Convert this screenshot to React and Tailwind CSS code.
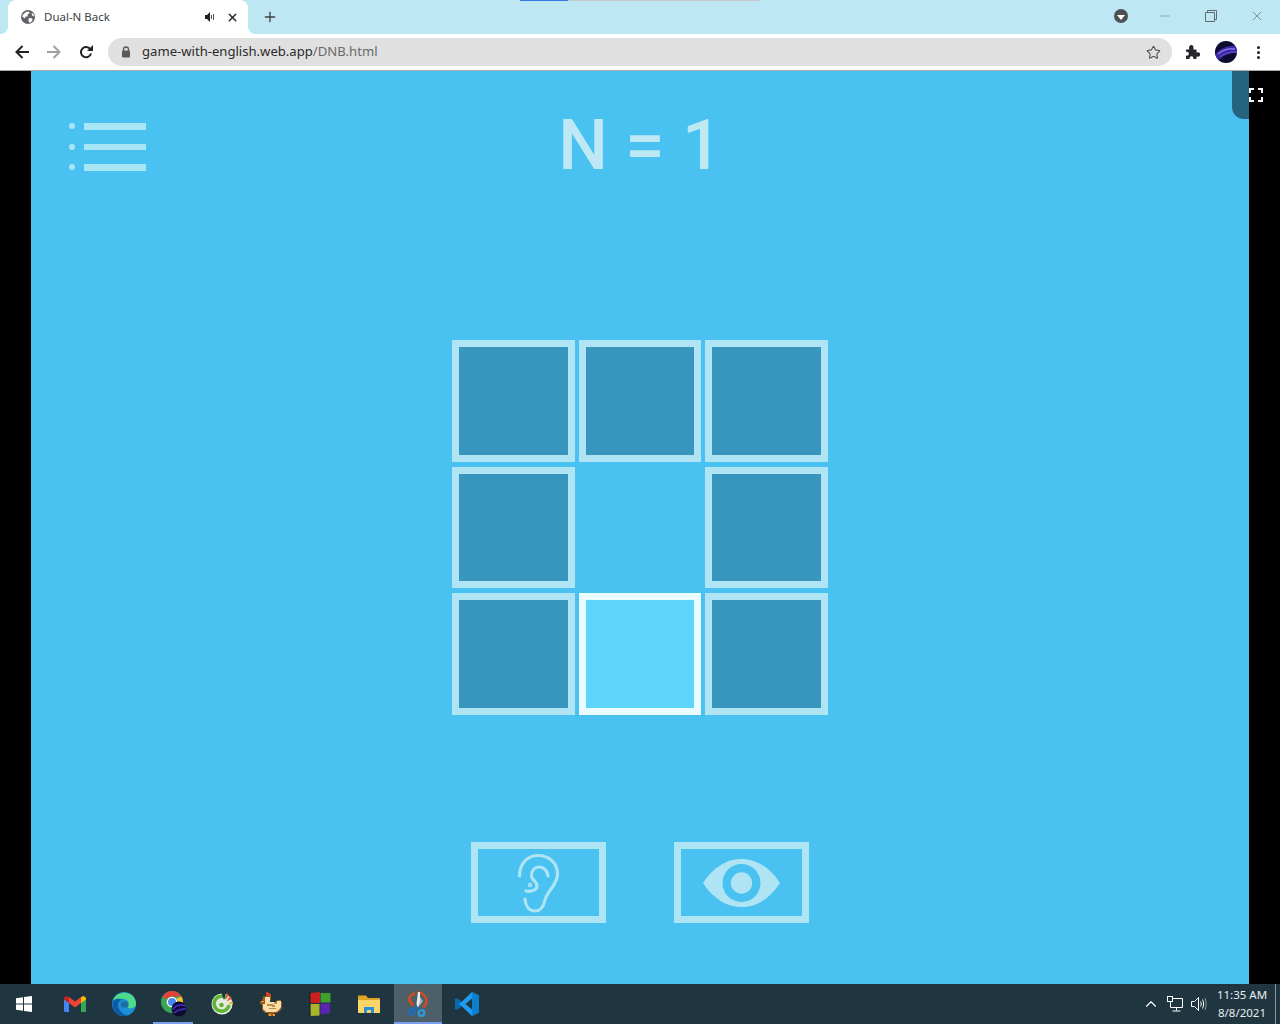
import { Star, Plus, X, Minus, ChevronUp } from "lucide-react";

const CELLS = [
  { col: 0, row: 0 },
  { col: 1, row: 0 },
  { col: 2, row: 0 },
  { col: 0, row: 1 },
  { col: 2, row: 1 },
  { col: 0, row: 2 },
  { col: 1, row: 2, lit: true },
  { col: 2, row: 2 },
];

function GlobeIcon() {
  return (
    <svg width="14" height="14" viewBox="0 0 14 14">
      <circle cx="7" cy="7" r="7" fill="#5f6368" />
      <path d="M2 4.500 5 2 8 1.600 8.500 3.400 6.500 4.600 6.800 6.600 4.600 6.600 4 8.400 1.200 6.600Z" fill="#fff" />
      <path d="M8 8 11 8.200 11.600 10 9.600 12.400 8 12.600 7.400 10Z" fill="#fff" />
      <path d="M10.600 2.600 12.600 4.600 13 6.400 11 5.400Z" fill="#fff" />
    </svg>
  );
}

function TabSpeaker() {
  return (
    <svg width="10" height="10" viewBox="0 0 10 10">
      <path d="M0 3h2l3-3v10L2 7H0Z" fill="#222" />
      <path d="M6.500 3v4M8.500 2v6" stroke="#555" strokeWidth="1" />
    </svg>
  );
}

function BackArrow({ color }) {
  return (
    <svg width="14" height="14" viewBox="0 0 14 14" fill="none" stroke={color} strokeWidth="2">
      <path d="M14 7H1.500M7.500 1 1.500 7 7.500 13" />
    </svg>
  );
}

function ForwardArrow({ color }) {
  return (
    <svg width="14" height="14" viewBox="0 0 14 14" fill="none" stroke={color} strokeWidth="2">
      <path d="M0 7H12.500M6.500 1 12.500 7 6.500 13" />
    </svg>
  );
}

function Reload() {
  return (
    <svg width="14" height="14" viewBox="0 0 14 14">
      <path d="M11.200 4.200A5.100 5.100 0 1 0 12 8.500" fill="none" stroke="#222" strokeWidth="2" />
      <path d="M14 0V6H8Z" fill="#222" />
    </svg>
  );
}

function LockIcon() {
  return (
    <svg width="10" height="12" viewBox="0 0 10 12">
      <path d="M2.500 5V3.500a2.500 2.500 0 0 1 5 0V5" fill="none" stroke="#5a5a5a" strokeWidth="1.300" />
      <rect x="1" y="4.500" width="8" height="7" rx="1" fill="#5a5a5a" />
    </svg>
  );
}

function Puzzle() {
  return (
    <svg width="16" height="16" viewBox="0 0 16 16">
      <path
        d="M1 5.500h3.200C3.600 3 4.600 1 6.300 1s2.700 2 2.100 4.500h3.100v3c2.600-.6 3.600.4 3.600 2s-1 2.700-3.600 2V15H8.300c.5-2-.5-2.800-1.800-2.800s-2.200.8-1.800 2.800H1v-3.400c2 .5 2.800-.6 2.800-1.900S3 7.300 1 7.800Z"
        fill="#26282b"
      />
    </svg>
  );
}

function Avatar() {
  return (
    <svg width="22" height="22" viewBox="0 0 22 22">
      <defs>
        <clipPath id="avatar-clip">
          <circle cx="11" cy="11" r="11" />
        </clipPath>
      </defs>
      <g clipPath="url(#avatar-clip)">
        <rect width="22" height="22" fill="#0c0a2e" />
        <path d="M0 14C5 7 14 4 22 5v7C15 11 8 14 3 20Z" fill="#3a2aa8" />
        <path d="M3 13C8 9 14 7 20 8" stroke="#8a6ee8" strokeWidth="1.500" fill="none" />
        <path d="M5 16C10 12 15 11 22 11" stroke="#5a46cc" strokeWidth="1.500" fill="none" />
      </g>
    </svg>
  );
}

function MenuIcon() {
  return (
    <div className="flex w-[77px] flex-col gap-[14px]">
      {[0, 1, 2].map((i) => (
        <div key={i} className="flex items-center justify-between">
          <span className="h-[6px] w-[6px] rounded-full bg-[#a8e6f6]" />
          <span className="h-[6.500px] w-[62px] bg-[#a8e6f6]" />
        </div>
      ))}
    </div>
  );
}

function EarIcon() {
  return (
    <svg width="50" height="64" viewBox="0 0 50 64" fill="none" stroke="#aee4f3" strokeWidth="3.200" strokeLinecap="round">
      <path d="M5.500 25C5.500 12 14 4.500 24 4.500C35 4.500 43.500 12 43.500 23C43.500 34 33 40 31 49C29.500 56 27 60 21 60C15 60 11.500 55 11 48" />
      <path d="M17.500 25C17.500 19 21 16 25 16C30 16 33.500 20 34 25" />
      <path d="M17.500 25C17.500 29 23 30 23 35C23 39 17 41 12 40" />
      <circle cx="16" cy="34" r="1.500" strokeWidth="1.500" />
    </svg>
  );
}

function EyeIcon() {
  return (
    <svg width="80" height="50" viewBox="0 0 80 50">
      <path d="M1 25C12 8 26 1 39.500 1C53 1 67 8 78 25C67 42 53 49 39.500 49C26 49 12 42 1 25Z" fill="#aee4f3" />
      <circle cx="39.500" cy="25" r="19" fill="#49c1f1" />
      <circle cx="39.500" cy="25" r="10.700" fill="#aee4f3" />
    </svg>
  );
}

function FullscreenIcon() {
  return (
    <svg width="14" height="14" viewBox="0 0 14 14" fill="none" stroke="#fff" strokeWidth="2">
      <path d="M1 5V1h4M9 1h4v4M13 9v4H9M5 13H1V9" />
    </svg>
  );
}

function WindowsLogo() {
  return (
    <svg width="16" height="16" viewBox="0 0 16 16" fill="#fff">
      <path d="M0 2.300 7 1.300V7.500H0ZM8 1.100 16 0V7.500H8ZM0 8.500H7V14.700L0 13.700ZM8 8.500H16V16L8 14.900Z" />
    </svg>
  );
}

function Gmail() {
  return (
    <svg width="22" height="16" viewBox="0 0 22 16">
      <path d="M0 3 5 6.500V16H1.500A1.500 1.500 0 0 1 0 14.500Z" fill="#4285f4" />
      <path d="M22 3 17 6.500V16h3.500A1.500 1.500 0 0 0 22 14.500Z" fill="#34a853" />
      <path d="M5 7 11 11.500 17 7V1L11 5.500 5 1Z" fill="#ea4335" />
      <path d="M0 3.500V2.500C0 .5 2.500-.5 4 .6L5 1.400V7Z" fill="#c5221f" />
      <path d="M22 3.500V2.500C22 .5 19.500-.5 18 .6L17 1.400V7Z" fill="#fbbc04" />
    </svg>
  );
}

function Edge() {
  return (
    <svg width="24" height="24" viewBox="0 0 24 24">
      <circle cx="12" cy="12" r="12" fill="#1d8fd6" />
      <path d="M1 8C4 1 12-1 18 2C22 4 24 8 24 12C24 16 19 17 15.500 16C18 13 17 8 12 7C7 6 3 8 1 8Z" fill="#4fd98a" />
      <path d="M.5 11C2 7 6 6 10 7.500C6 9 5 13 7 17C9 21 14 24 17 23C11 26 3 22 1 16Z" fill="#0c5aa6" />
      <path d="M8.500 13C9 9 14 8 16 11C17 13 16 15 15 15.500H10Z" fill="#1f3540" opacity="0.350" />
    </svg>
  );
}

function ChromeWithProfile() {
  return (
    <svg width="26" height="26" viewBox="0 0 26 26" className="ml-[3px]">
      <circle cx="11" cy="11" r="11" fill="#3aa757" />
      <path d="M1.500 5.500A11 11 0 0 1 20.500 5.500H11A5.500 5.500 0 0 0 6 8.500Z" fill="#e0433a" />
      <path d="M20.500 5.500A11 11 0 0 1 11 22L15.800 13.800A5.500 5.500 0 0 0 15.500 7.500Z" fill="#fbc02d" />
      <circle cx="11" cy="11" r="5.300" fill="#fff" />
      <circle cx="11" cy="11" r="4" fill="#4a8af0" />
      <circle cx="18" cy="18" r="7.500" fill="#0c0a2e" />
      <path d="M11.500 19C14 15 19 13 25 15M13 22C16 19 20 18 25 18" stroke="#3a2aa8" strokeWidth="2" fill="none" />
    </svg>
  );
}

function CocCoc() {
  return (
    <svg width="22" height="22" viewBox="0 0 22 22">
      <circle cx="11" cy="11" r="10.500" fill="#e4ebe0" />
      <path d="M15.500 5A7.500 7.500 0 1 0 18 12" fill="none" stroke="#5fb536" strokeWidth="3.500" />
      <circle cx="10.500" cy="12" r="2.300" fill="#5fb536" />
      <path d="M10.500 0 13 7 15 0Z" fill="#1f3540" />
      <path d="M15.500 0 14.500 7 18 2Z" fill="#e05a32" />
      <path d="M19 3 15.500 8.500 21 6Z" fill="#e05a32" />
      <path d="M21.500 8 17 10.500 22 11.500Z" fill="#e8b23a" />
    </svg>
  );
}

function Chicken() {
  return (
    <svg width="24" height="24" viewBox="0 0 24 24">
      <path d="M7 2h4v2h1v4h-1v2h6l1-2h4v2h1v6l-2 3-3 2h-3v3H9v-3H6l-3-3v-5l-2-1V9h2V7h1V4h3Z" fill="#9a5a1e" />
      <path d="M6 5h5v5h6l2-1h3v6l-2 3-3 2H7l-3-3v-5h2Z" fill="#f8dfae" />
      <path d="M7 0h2v1h2v1h1v2H8V3H7Z" fill="#d8411f" />
      <path d="M5 9h-3v1h3Z" fill="#e8a020" />
      <path d="M8 12h6v1h2v2h-3v-1H8ZM15 10h3v2h-3ZM10 16h7v1h-7Z" fill="#c98a3a" />
      <path d="M10 22h2v2h-2ZM14 22h2v2h-2Z" fill="#e8a020" />
    </svg>
  );
}

function ColorSquares() {
  return (
    <svg width="22" height="24" viewBox="0 0 22 24">
      <path d="M1 1 11 0V11H1Z" fill="#c9201f" />
      <path d="M11.500 1 21.500 1V10.500H11.500Z" fill="#3f9f2b" />
      <path d="M1 12H10.500V23.500L1.500 24Z" fill="#a8b52d" />
      <path d="M11.500 11.500H21V21L11.500 22.500Z" fill="#5a23b0" />
      <path d="M0 0.500 1.500 0.500 1.500 24 0.500 24Z" fill="#222" />
    </svg>
  );
}

function Folder() {
  return (
    <svg width="22" height="18" viewBox="0 0 22 18">
      <path d="M0 1.500C0 1 .5 .5 1 .5H8L10 3H21C21.500 3 22 3.500 22 4V6H0Z" fill="#e0a526" />
      <rect y="5" width="22" height="13" fill="#fcd568" />
      <path d="M6 18V12H16V18H13V15H9V18Z" fill="#2b8fd8" />
    </svg>
  );
}

function Snip() {
  return (
    <svg width="20" height="26" viewBox="0 0 20 26">
      <path d="M9 1.500C14 1 18.500 5 18.500 10C18.500 13 17 15 15 16.500" fill="none" stroke="#d24a1f" strokeWidth="2.500" />
      <path d="M7 2.500C3 3 1 6 1.500 9C2 11.500 3.500 13 5.500 14" fill="none" stroke="#d24a1f" strokeWidth="3" />
      <path d="M10 1 12 1 12 12 10 17 8.500 13Z" fill="#e8ecef" />
      <path d="M12 6 15 10 11.500 15Z" fill="#a9b0b5" />
      <circle cx="3.500" cy="21" r="2.800" fill="none" stroke="#1d6fc0" strokeWidth="2.200" />
      <circle cx="13.500" cy="22" r="2.800" fill="none" stroke="#2b9be0" strokeWidth="2.200" />
      <path d="M5.500 19 9 16M11.500 19.500 10 16" fill="none" stroke="#1d6fc0" strokeWidth="2" />
    </svg>
  );
}

function VsCode() {
  return (
    <svg width="24" height="24" viewBox="0 0 24 24">
      <path d="M17 0 24 3.400V20.600L17 24 6.500 14 2 17.500 0 16.500V7.500L2 6.500 6.500 10ZM17 6.500 10.500 12 17 17.500Z" fill="#1f9cf0" />
      <path d="M17 0 24 3.400V20.600L17 24V17.500L17 6.500Z" fill="#0d7fcf" />
      <path d="M2 6.500 6.500 10 3.500 12 6.500 14 2 17.500 0 16.500V7.500Z" fill="#0a68b0" />
    </svg>
  );
}

function NetworkTray() {
  return (
    <svg width="16" height="16" viewBox="0 0 16 16" fill="none" stroke="#fff" strokeWidth="1">
      <path d="M3.500 2.500H15.500V11.500H3.500" />
      <path d="M9.500 11.500V14.500M5.500 15H13.500" />
      <rect x=".5" y=".5" width="5" height="5" fill="#1f3540" />
      <path d="M3.500 5.500V11.500" />
    </svg>
  );
}

function SpeakerTray() {
  return (
    <svg width="16" height="16" viewBox="0 0 16 16" fill="none" stroke="#fff" strokeWidth="1">
      <path d="M.5 5.500H3.500L7.500 1.500V14.500L3.500 10.500H.5Z" />
      <path d="M9.500 5.500C10.500 7 10.500 9 9.500 10.500" />
      <path d="M11.500 3.500C13 6 13 10 11.500 12.500" />
      <path d="M14 2C15.500 5.500 15.500 10.500 14 14" stroke="#8a959b" />
    </svg>
  );
}

const TASKBAR = [
  { id: "gmail", icon: <Gmail /> },
  { id: "edge", icon: <Edge /> },
  { id: "chrome", icon: <ChromeWithProfile />, open: true },
  { id: "coccoc", icon: <CocCoc /> },
  { id: "chicken", icon: <Chicken /> },
  { id: "squares", icon: <ColorSquares /> },
  { id: "folder", icon: <Folder /> },
  { id: "snip", icon: <Snip />, active: true },
  { id: "vscode", icon: <VsCode /> },
];

export default function App() {
  return (
    <div className="relative flex h-[1024px] w-[1280px] flex-col overflow-hidden bg-black font-['Noto_Sans',sans-serif]">
      {/* tab strip */}
      <div className="relative flex h-[34px] shrink-0 items-end bg-[#bee7f4] pl-2">
        <span className="absolute left-[520px] top-0 h-px w-[48px] bg-[#3b78e7]" />
        <span className="absolute left-[568px] top-0 h-px w-[192px] bg-[#c4c7c9]" />
        <div className="relative flex h-[34px] w-[240px] items-center rounded-t-lg bg-white pl-[13px] pr-[9px]">
          <span className="absolute bottom-0 left-[-8px] h-2 w-2 bg-[radial-gradient(circle_at_0_0,transparent_8px,white_8px)]" />
          <span className="absolute bottom-0 right-[-8px] h-2 w-2 bg-[radial-gradient(circle_at_100%_0,transparent_8px,white_8px)]" />
          <GlobeIcon />
          <span className="ml-[9px] flex-1 text-[11.500px] text-[#3c4043]">Dual-N Back</span>
          <TabSpeaker />
          <X size={13} strokeWidth={2.500} className="ml-[11px] text-[#222]" />
        </div>
        <Plus size={16} strokeWidth={2} className="mb-[9px] ml-[14px] text-[#3c4043]" />
        <div className="ml-auto mb-[10px] flex items-center">
          <span className="flex h-[14px] w-[14px] items-center justify-center rounded-full bg-[#4d5154]">
            <span className="mt-[2px] h-0 w-0 border-x-[4px] border-t-[5px] border-x-transparent border-t-white" />
          </span>
          <Minus size={14} strokeWidth={1} className="ml-[30px] text-[#5f6b70]" />
          <svg width="12" height="12" viewBox="0 0 12 12" fill="none" stroke="#5f6b70" className="ml-[33px]">
            <path d="M.5 2.500H9.500V11.500H.5ZM2.500 2.500V.5H11.500V9.500H9.500" />
          </svg>
          <X size={16} strokeWidth={1} className="ml-[32px] mr-[15px] text-[#5f6b70]" />
        </div>
      </div>

      {/* toolbar */}
      <div className="flex h-[37px] shrink-0 items-center border-b border-[#aaaaaa] bg-white">
        <div className="ml-[15px]">
          <BackArrow color="#222" />
        </div>
        <div className="ml-[18px]">
          <ForwardArrow color="#a0a0a0" />
        </div>
        <div className="ml-[18px]">
          <Reload />
        </div>
        <div className="ml-[15px] flex h-[28px] w-[1064px] items-center rounded-full bg-[#e0e0e0] pl-[13px] pr-[11px]">
          <LockIcon />
          <span className="ml-[11px] flex-1 text-[13.100px] text-[#2b2b2b]">
            game-with-english.web.app<span className="text-[#6a6a6a]">/DNB.html</span>
          </span>
          <Star size={15} strokeWidth={1.800} className="text-[#555]" />
        </div>
        <div className="ml-[13px]">
          <Puzzle />
        </div>
        <div className="ml-[14px]">
          <Avatar />
        </div>
        <div className="ml-[20px] flex flex-col gap-[2px]">
          <span className="h-[3px] w-[3px] rounded-full bg-[#222]" />
          <span className="h-[3px] w-[3px] rounded-full bg-[#222]" />
          <span className="h-[3px] w-[3px] rounded-full bg-[#222]" />
        </div>
      </div>

      {/* page */}
      <div className="flex min-h-0 flex-1">
        <div className="w-[31px] shrink-0 bg-black" />
        <main className="relative flex w-[1218px] shrink-0 flex-col items-center bg-[#49c1f1]">
          <span className="absolute right-0 top-0 h-[48px] w-[17px] rounded-bl-xl bg-[#26637f]" />
          <header className="grid h-[269px] w-full grid-cols-[1fr_auto_1fr] items-start">
            <div className="pl-[38px] pt-[52px]">
              <MenuIcon />
            </div>
            <h1 className="mt-[28px] whitespace-pre font-['Roboto',sans-serif] text-[70px] font-medium leading-[92px] text-[#bde8f4]">
              N = 1
            </h1>
          </header>
          <div className="grid grid-cols-[123px_122px_123px] grid-rows-[122px_121px_122px] gap-x-1 gap-y-[5px]">
            {CELLS.map((c) => (
              <div
                key={`${c.col}-${c.row}`}
                className={
                  c.lit
                    ? "border-[7px] border-[#e9fdff] bg-[#5fd5fb]"
                    : "border-[7px] border-[#aee4f3] bg-[#3795be]"
                }
                style={{ gridColumn: c.col + 1, gridRow: c.row + 1 }}
              />
            ))}
          </div>
          <div className="mt-[127px] flex gap-[68px]">
            <button className="flex h-[81px] w-[135px] items-center justify-center border-[7px] border-[#aee4f3]">
              <EarIcon />
            </button>
            <button className="flex h-[81px] w-[135px] items-center justify-center border-[7px] border-[#aee4f3]">
              <EyeIcon />
            </button>
          </div>
        </main>
        <div className="flex-1 bg-black pt-[17px]">
          <FullscreenIcon />
        </div>
      </div>

      {/* taskbar */}
      <footer className="flex h-[40px] shrink-0 items-stretch bg-[#1f3540] text-white">
        <div className="flex w-[50px] items-center justify-center pr-[2px]">
          <WindowsLogo />
        </div>
        {TASKBAR.map((t) => (
          <div
            key={t.id}
            className={
              t.active
                ? "relative ml-px flex w-[48px] items-center justify-center bg-[#4d5f68]"
                : "relative flex w-[49px] items-center justify-center"
            }
          >
            {t.icon}
            {t.open && <span className="absolute bottom-0 left-[5px] right-1 h-[2px] bg-[#7b9ff0]" />}
            {t.active && <span className="absolute bottom-0 left-0 right-0 h-[2px] bg-[#7b9ff0]" />}
          </div>
        ))}
        <div className="ml-auto flex items-center">
          <ChevronUp size={18} strokeWidth={1.500} className="text-white" />
          <div className="ml-[7px]">
            <NetworkTray />
          </div>
          <div className="ml-[8px]">
            <SpeakerTray />
          </div>
          <div className="ml-[9px] flex w-[52px] flex-col items-center whitespace-nowrap text-[11.500px] leading-[18px] text-[#e8eef0]">
            <span>11:35 AM</span>
            <span>8/8/2021</span>
          </div>
          <span className="ml-[7px] h-full w-px bg-[#8a959b]" />
          <span className="w-1" />
        </div>
      </footer>
    </div>
  );
}
